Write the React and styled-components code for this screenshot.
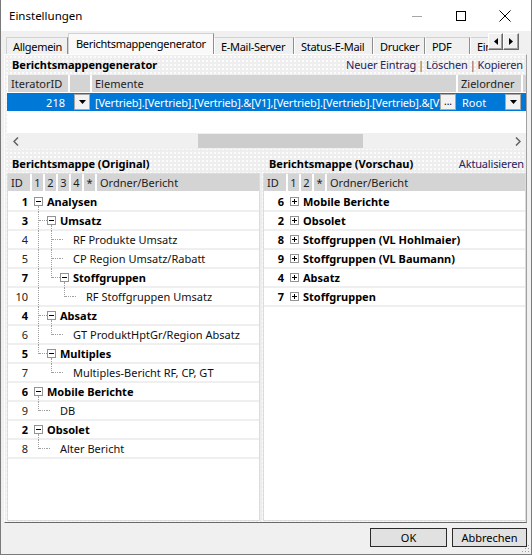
import React from "react";
import styled, { createGlobalStyle } from "styled-components";

const GlobalStyle = createGlobalStyle`
  html, body {
    margin: 0;
    padding: 0;
    background: #fff;
  }
  body {
    font-family: "Noto Sans", "DejaVu Sans", sans-serif;
    font-size: 11px;
    color: #000;
  }
  * {
    box-sizing: border-box;
  }
`;

const Window = styled.div`
  position: relative;
  width: 532px;
  height: 555px;
  display: flex;
  flex-direction: column;
  border: 1px solid #7a7a7a;
  border-top: none;
  background: #f0f0f0;
`;

const TitleBar = styled.div`
  flex: none;
  height: 31px;
  display: flex;
  align-items: center;
  background: #fff;
  padding-right: 4px;
`;

const Title = styled.div`
  flex: 1;
  padding-left: 8px;
  font-size: 11.5px;
`;

const CaptionButton = styled.div`
  width: 44px;
  height: 31px;
  display: flex;
  align-items: center;
  justify-content: center;
`;

const Body = styled.div`
  flex: 1;
  min-height: 0;
  display: flex;
  flex-direction: column;
  padding: 2px 4px 7px 3px;
`;

const TabStrip = styled.div`
  flex: none;
  height: 21px;
  display: flex;
  align-items: flex-end;
  padding: 0 8px 0 2px;
  position: relative;
  z-index: 1;
`;

const TabList = styled.div`
  flex: 1;
  min-width: 0;
  height: 100%;
  display: flex;
  align-items: flex-end;
  overflow: hidden;
`;

const Tab = styled.div`
  flex: none;
  width: ${(p) => p.$w}px;
  height: ${(p) => (p.$active ? 22 : 17)}px;
  margin-bottom: ${(p) => (p.$active ? -1 : 0)}px;
  padding: ${(p) => (p.$active ? "0 0 3px 7px" : "0 0 0 6px")};
  display: flex;
  align-items: center;
  white-space: nowrap;
  overflow: hidden;
  letter-spacing: -0.3px;
  background: ${(p) => (p.$active ? "#f9f9f9" : "#f0f0f0")};
  border-top: 1px solid #d2d2d2;
  border-left: 1px solid ${(p) => (p.$first || p.$active ? "#d2d2d2" : "#fff")};
  border-right: 1px solid #8e8e8e;
  color: #000;
`;

const TabScroll = styled.div`
  flex: none;
  display: flex;
  margin-bottom: 4px;
`;

const ScrollButton = styled.div`
  width: ${(p) => p.$w}px;
  height: 17px;
  display: flex;
  align-items: center;
  justify-content: center;
  background: #f0f0f0;
  border: 1px solid #fff;
  border-right-color: #696969;
  border-bottom-color: #696969;
  box-shadow: inset -1px -1px 0 #a0a0a0;
`;

const TabPanel = styled.div`
  flex: 1;
  min-height: 0;
  display: flex;
  flex-direction: column;
  padding: 0 0 1px 2px;
  border-top: 1px solid #fcfcfc;
  border-left: 1px solid #fcfcfc;
  border-right: 1px solid #a0a0a0;
  border-bottom: 1px solid #696969;
  background-color: #eeeeee;
  background-image: radial-gradient(circle, #fbfbfb 0.7px, transparent 1px);
  background-size: 4px 4px;
`;

const SectionBar = styled.div`
  flex: none;
  height: ${(p) => p.$h || 18}px;
  display: flex;
  align-items: center;
  justify-content: space-between;
  padding: ${(p) => p.$pad || "0 3px 0 5px"};
`;

const SectionTitle = styled.span`
  font-weight: 700;
  font-size: 11px;
  color: #000;
`;

const Links = styled.span`
  color: #29235c;
  letter-spacing: -0.15px;
`;

const Sep = styled.span`
  color: #555;
  margin: 0 2px;
`;

const Grid = styled.div`
  flex: none;
  height: 74px;
  margin-top: 2px;
  display: flex;
  flex-direction: column;
  background: #fff;
`;

const GridHead = styled.div`
  flex: none;
  height: 17px;
  margin-bottom: 1px;
  display: flex;
  gap: 2px;
  padding-left: 1px;
`;

const HeadCell = styled.div`
  flex: ${(p) => (p.$w ? "none" : 1)};
  width: ${(p) => (p.$w ? `${p.$w}px` : "auto")};
  display: flex;
  align-items: center;
  justify-content: ${(p) => (p.$center ? "center" : "flex-start")};
  padding-left: ${(p) => (p.$center ? 0 : 3)}px;
  background: #d4d4d4;
  color: #1e1e1e;
  white-space: nowrap;
  overflow: hidden;
`;

const GridRow = styled.div`
  flex: none;
  height: 18px;
  display: flex;
  gap: 2px;
  padding-left: 1px;
  background: #0078d7;
  color: #fff;
`;

const Cell = styled.div`
  flex: ${(p) => (p.$w ? "none" : 1)};
  width: ${(p) => (p.$w ? `${p.$w}px` : "auto")};
  display: flex;
  align-items: center;
  justify-content: ${(p) => (p.$right ? "flex-end" : "flex-start")};
  padding: 0 ${(p) => p.$pr || 0}px 0 ${(p) => p.$pl || 0}px;
  min-width: 0;
  overflow: hidden;
`;

const CellText = styled.span`
  flex: 1;
  min-width: 0;
  white-space: nowrap;
  overflow: hidden;
  letter-spacing: ${(p) => (p.$tight ? "-0.2px" : "normal")};
`;

const MiniButton = styled.div`
  flex: none;
  width: 16px;
  height: 16px;
  display: flex;
  align-items: center;
  justify-content: center;
  background: #f2f2f2;
  border: 1px solid #a8a8a8;
  color: #000;
  font-size: 10px;
  line-height: 1;
  padding-bottom: ${(p) => (p.$text ? 3 : 0)}px;
`;

const GridBlank = styled.div`
  flex: 1;
`;

const HScroll = styled.div`
  flex: none;
  height: 16px;
  display: flex;
  align-items: center;
  background: #f0f0f0;
`;

const ScrollArrow = styled.div`
  flex: none;
  width: 17px;
  height: 16px;
  display: flex;
  align-items: center;
  justify-content: center;
`;

const Track = styled.div`
  flex: 1;
  height: 100%;
  display: flex;
  align-items: center;
`;

const Thumb = styled.div`
  margin-left: 174px;
  width: 165px;
  height: 14px;
  background: #cdcdcd;
`;

const Columns = styled.div`
  flex: 1;
  min-height: 0;
  display: flex;
  gap: 3px;
  margin-top: 5px;
`;

const Column = styled.div`
  flex: ${(p) => (p.$w ? "none" : 1)};
  width: ${(p) => (p.$w ? `${p.$w}px` : "auto")};
  min-width: 0;
  display: flex;
  flex-direction: column;
`;

const TreePanel = styled.div`
  flex: 1;
  min-height: 0;
  background: #fff;
  border: 1px solid #dcdcdc;
  overflow: hidden;
`;

const TreeHead = styled.div`
  height: 17px;
  margin-bottom: 2px;
  display: flex;
  gap: 2px;
`;

const Row = styled.div`
  height: 19px;
  display: flex;
  align-items: center;
  border-bottom: 2px solid #efefef;
  white-space: nowrap;
`;

const RowId = styled.span`
  flex: none;
  width: 20px;
  text-align: right;
  font-weight: ${(p) => (p.$bold ? 700 : 400)};
  color: ${(p) => (p.$bold ? "#000" : "#222")};
  margin-right: 6px;
`;

const Guide = styled.span`
  position: relative;
  flex: none;
  align-self: stretch;
  width: 13px;
  &::before {
    content: "";
    display: ${(p) => (p.$type === "blank" ? "none" : "block")};
    position: absolute;
    left: 4px;
    top: 0;
    height: ${(p) => (p.$type === "elbow" ? "9px" : "19px")};
    border-left: 1px dotted #a0a0a0;
  }
  &::after {
    content: "";
    display: ${(p) => (p.$type === "tee" || p.$type === "elbow" ? "block" : "none")};
    position: absolute;
    left: 5px;
    right: 0;
    top: 8px;
    border-top: 1px dotted #a0a0a0;
  }
`;

const Toggle = styled.span`
  position: relative;
  flex: none;
  align-self: stretch;
  width: 13px;
  display: flex;
  align-items: center;
  &::after {
    content: "";
    display: ${(p) => (p.$open ? "block" : "none")};
    position: absolute;
    left: 4px;
    top: 13px;
    height: 6px;
    border-left: 1px dotted #a0a0a0;
  }
`;

const Box = styled.span`
  position: relative;
  width: 9px;
  height: 9px;
  border: 1px solid #939393;
  background: #fff;
  &::before {
    content: "";
    position: absolute;
    left: 1px;
    top: 3px;
    width: 5px;
    height: 1px;
    background: #000;
  }
  &::after {
    content: "";
    display: ${(p) => (p.$plus ? "block" : "none")};
    position: absolute;
    left: 3px;
    top: 1px;
    width: 1px;
    height: 5px;
    background: #000;
  }
`;

const Stub = styled.span`
  position: relative;
  flex: none;
  align-self: stretch;
  width: 13px;
  &::before {
    content: "";
    position: absolute;
    left: 0;
    top: 8px;
    width: 3px;
    border-top: 1px dotted #a0a0a0;
  }
`;

const RowLabel = styled.span`
  font-weight: ${(p) => (p.$bold ? 700 : 400)};
  color: ${(p) => (p.$bold ? "#000" : "#111")};
`;

const Footer = styled.div`
  flex: none;
  display: flex;
  justify-content: flex-end;
  gap: 5px;
  margin-top: 5px;
`;

const Button = styled.button`
  width: ${(p) => p.$w}px;
  height: 19px;
  padding: 0;
  border: 1px solid #2b2b2b;
  background: #e1e1e1;
  font-family: inherit;
  font-size: 11px;
  color: #000;
`;

const Grip = styled.svg`
  position: absolute;
  right: 1px;
  bottom: 1px;
`;

const tabs = [
  { label: "Allgemein", w: 62 },
  { label: "Berichtsmappengenerator", w: 146, active: true },
  { label: "E-Mail-Server", w: 80 },
  { label: "Status-E-Mail", w: 79 },
  { label: "Drucker", w: 52 },
  { label: "PDF", w: 45 },
  { label: "Einträge", w: 60 },
];

const leftRows = [
  { id: 1, label: "Analysen", node: true, guides: [] },
  { id: 3, label: "Umsatz", node: true, guides: ["tee"] },
  { id: 4, label: "RF Produkte Umsatz", guides: ["pipe", "tee"] },
  { id: 5, label: "CP Region Umsatz/Rabatt", guides: ["pipe", "tee"] },
  { id: 7, label: "Stoffgruppen", node: true, guides: ["pipe", "elbow"] },
  { id: 10, label: "RF Stoffgruppen Umsatz", guides: ["pipe", "blank", "elbow"] },
  { id: 4, label: "Absatz", node: true, guides: ["tee"] },
  { id: 6, label: "GT ProduktHptGr/Region Absatz", guides: ["pipe", "elbow"] },
  { id: 5, label: "Multiples", node: true, guides: ["elbow"] },
  { id: 7, label: "Multiples-Bericht RF, CP, GT", guides: ["blank", "elbow"] },
  { id: 6, label: "Mobile Berichte", node: true, guides: [] },
  { id: 9, label: "DB", guides: ["elbow"] },
  { id: 2, label: "Obsolet", node: true, guides: [] },
  { id: 8, label: "Alter Bericht", guides: ["elbow"] },
];

const rightRows = [
  { id: 6, label: "Mobile Berichte" },
  { id: 2, label: "Obsolet" },
  { id: 8, label: "Stoffgruppen (VL Hohlmaier)" },
  { id: 9, label: "Stoffgruppen (VL Baumann)" },
  { id: 4, label: "Absatz" },
  { id: 7, label: "Stoffgruppen" },
];

const DownTriangle = () => (
  <svg width="7" height="4" viewBox="0 0 7 4">
    <path d="M0 0H7L3.5 4Z" fill="#000" />
  </svg>
);

const TreeRow = ({ row, collapsed }) => (
  <Row>
    <RowId $bold={row.node || collapsed}>{row.id}</RowId>
    {(row.guides || []).map((g, i) => (
      <Guide key={i} $type={g} />
    ))}
    {row.node || collapsed ? (
      <Toggle $open={!collapsed}>
        <Box $plus={collapsed} />
      </Toggle>
    ) : (
      <Stub />
    )}
    <RowLabel $bold={row.node || collapsed}>{row.label}</RowLabel>
  </Row>
);

const TreeHeader = ({ levels }) => (
  <TreeHead>
    <HeadCell $w={22}>ID</HeadCell>
    {levels.map((l) => (
      <HeadCell key={l} $w={11} $center>
        {l}
      </HeadCell>
    ))}
    <HeadCell>Ordner/Bericht</HeadCell>
  </TreeHead>
);

const App = () => (
  <>
    <GlobalStyle />
    <Window>
      <TitleBar>
        <Title>Einstellungen</Title>
        <CaptionButton>
          <svg width="10" height="10" viewBox="0 0 10 10">
            <path d="M0 5.5H10" stroke="#a6a6a6" strokeWidth="1" />
          </svg>
        </CaptionButton>
        <CaptionButton>
          <svg width="10" height="10" viewBox="0 0 10 10">
            <rect x="0.5" y="0.5" width="9" height="9" fill="none" stroke="#000" />
          </svg>
        </CaptionButton>
        <CaptionButton>
          <svg width="12" height="12" viewBox="0 0 12 12">
            <path d="M0.5 0.5L11.5 11.5M11.5 0.5L0.5 11.5" stroke="#000" strokeWidth="1" />
          </svg>
        </CaptionButton>
      </TitleBar>

      <Body>
        <TabStrip>
          <TabList>
            {tabs.map((t, i) => (
              <Tab key={t.label} $w={t.w} $active={t.active} $first={i === 0}>
                {t.label}
              </Tab>
            ))}
          </TabList>
          <TabScroll>
            <ScrollButton $w={15}>
              <svg width="4" height="7" viewBox="0 0 4 7">
                <path d="M4 0V7L0 3.5Z" fill="#000" />
              </svg>
            </ScrollButton>
            <ScrollButton $w={16}>
              <svg width="4" height="7" viewBox="0 0 4 7">
                <path d="M0 0V7L4 3.5Z" fill="#000" />
              </svg>
            </ScrollButton>
          </TabScroll>
        </TabStrip>

        <TabPanel>
          <SectionBar>
            <SectionTitle>Berichtsmappengenerator</SectionTitle>
            <Links>
              Neuer Eintrag<Sep>|</Sep>Löschen<Sep>|</Sep>Kopieren
            </Links>
          </SectionBar>

          <Grid>
            <GridHead>
              <HeadCell $w={60}>IteratorID</HeadCell>
              <HeadCell $w={20} />
              <HeadCell $w={364}>Elemente</HeadCell>
              <HeadCell $w={63}>Zielordner</HeadCell>
              <HeadCell />
            </GridHead>
            <GridRow>
              <Cell $w={60} $right $pr={3}>
                218
              </Cell>
              <Cell $w={20} $right>
                <MiniButton>
                  <DownTriangle />
                </MiniButton>
              </Cell>
              <Cell $w={364} $pl={3}>
                <CellText $tight>
                  [Vertrieb].[Vertrieb].[Vertrieb].&amp;[V1],[Vertrieb].[Vertrieb].[Vertrieb].&amp;[V2
                </CellText>
                <MiniButton $text>...</MiniButton>
              </Cell>
              <Cell $w={63} $pl={4}>
                <CellText>Root</CellText>
                <MiniButton>
                  <DownTriangle />
                </MiniButton>
              </Cell>
              <Cell />
            </GridRow>
            <GridBlank />
            <HScroll>
              <ScrollArrow>
                <svg width="6" height="9" viewBox="0 0 6 9">
                  <path d="M5 0.5L1 4.5L5 8.5" fill="none" stroke="#606060" strokeWidth="1.5" />
                </svg>
              </ScrollArrow>
              <Track>
                <Thumb />
              </Track>
              <ScrollArrow>
                <svg width="6" height="9" viewBox="0 0 6 9">
                  <path d="M1 0.5L5 4.5L1 8.5" fill="none" stroke="#606060" strokeWidth="1.5" />
                </svg>
              </ScrollArrow>
            </HScroll>
          </Grid>

          <Columns>
            <Column $w={253}>
              <SectionBar $h={19} $pad="0 2px 0 5px">
                <SectionTitle>Berichtsmappe (Original)</SectionTitle>
              </SectionBar>
              <TreePanel>
                <TreeHeader levels={["1", "2", "3", "4", "*"]} />
                {leftRows.map((r, i) => (
                  <TreeRow key={i} row={r} />
                ))}
              </TreePanel>
            </Column>
            <Column>
              <SectionBar $h={19} $pad="0 2px 0 6px">
                <SectionTitle>Berichtsmappe (Vorschau)</SectionTitle>
                <Links>Aktualisieren</Links>
              </SectionBar>
              <TreePanel>
                <TreeHeader levels={["1", "2", "*"]} />
                {rightRows.map((r, i) => (
                  <TreeRow key={i} row={r} collapsed />
                ))}
              </TreePanel>
            </Column>
          </Columns>
        </TabPanel>

        <Footer>
          <Button $w={77}>OK</Button>
          <Button $w={75}>Abbrechen</Button>
        </Footer>
      </Body>

      <Grip width="10" height="10" viewBox="0 0 10 10">
        {[
          [8, 2],
          [8, 5],
          [5, 5],
          [8, 8],
          [5, 8],
          [2, 8],
        ].map(([x, y], i) => (
          <rect key={i} x={x} y={y} width="1" height="1" fill="#a0a0a0" />
        ))}
      </Grip>
    </Window>
  </>
);

export default App;
